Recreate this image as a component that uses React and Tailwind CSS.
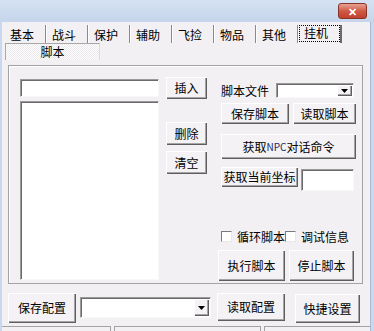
import React from "react";

const raised =
  "bg-[#f4f2f4] shadow-[inset_1px_1px_0_#ffffff,inset_-1px_-1px_0_#5e5e5e,inset_-2px_-2px_0_#a5a5a5] flex items-center justify-center text-black";
const sunken =
  "bg-white border-t border-l border-[#9a9a9a] border-b border-r border-b-[#f8f8f8] border-r-[#f8f8f8] shadow-[inset_1px_1px_0_#6a6a6a]";

function Btn({ className = "", children }) {
  return <div className={`${raised} ${className}`}>{children}</div>;
}

function Arrow() {
  return (
    <div className={`${raised} w-[15px] h-full`}>
      <svg width="7" height="4" viewBox="0 0 7 4">
        <polygon points="0,0 7,0 3.5,4" fill="#000" />
      </svg>
    </div>
  );
}

function Combo({ className = "" }) {
  return (
    <div className={`${sunken} flex justify-end p-[1px] ${className}`}>
      <Arrow />
    </div>
  );
}

function Check() {
  return <div className="w-[11px] h-[11px] bg-white border-t border-l border-[#7a7a7a] border-b border-r border-b-[#e8e8e8] border-r-[#e8e8e8]" />;
}

const tabs = ["基本", "战斗", "保护", "辅助", "飞捡", "物品", "其他"];

export default function App() {
  return (
    <div className="w-[374px] h-[331px] overflow-hidden flex flex-col bg-[#f3f0f3] text-[12px] leading-[14px] text-black font-['Noto_Sans_CJK_SC','Noto_Sans_CJK_JP',sans-serif]">
      {/* title bar */}
      <div className="h-[22px] flex justify-end bg-gradient-to-b from-[#d6e2f2] to-[#c5d5eb] shrink-0">
        <div className="mt-[3px] mr-[7px] w-[29px] h-[16px] rounded-[3px] border border-[#8a3426] bg-gradient-to-b from-[#e6a193] via-[#cf5a45] to-[#c0412d] flex items-center justify-center text-white text-[11px] font-bold leading-none">
          ✕
        </div>
      </div>
      <div className="flex-1 flex">
        <div className="w-[2px] bg-[#c9d8ed]" />
        <div className="flex-1 flex flex-col">
          {/* tab row */}
          <div className="mt-[3px] h-[18px] flex pl-[3px]">
            {tabs.map((t) => (
              <div key={t} className="flex h-full">
                <div className="pl-[5px] pr-[11px] flex items-end pb-[1px]">{t}</div>
                <div className="w-[1px] h-full bg-[#8a8a8a]" />
                <div className="w-[1px] h-full bg-white" />
              </div>
            ))}
            <div className="flex h-full">
              <div className="w-[41px] h-[17px] border border-dotted border-black flex items-end pb-[1px] pl-[4px]">挂机</div>
              <div className="w-[2px] h-full bg-[#6a6a6a]" />
            </div>
          </div>
          {/* sub tab */}
          <div className="flex pl-[3px]">
            <div className="w-[95px] h-[17px] flex items-center justify-center border-t border-l border-[#a8a8a8] border-r border-r-[#dcdcdc] bg-[repeating-conic-gradient(#ffffff_0_25%,#ebe8eb_0_50%)] bg-[length:2px_2px]">
              脚本
            </div>
          </div>
          {/* panel */}
          <div className="ml-[6px] mt-[5px] w-[355px] h-[219px] border border-[#a3a3a3] shadow-[inset_1px_1px_0_#ffffff] flex pt-[11px] pl-[11px]">
            <div className="w-[139px] flex flex-col mt-[2px]">
              <div className={`${sunken} h-[18px]`} />
              <div className={`${sunken} h-[179px] mt-[4px]`} />
            </div>
            <div className="w-[41px] ml-[7px] flex flex-col">
              <Btn className="h-[22px]">插入</Btn>
              <Btn className="h-[23px] mt-[23px]">删除</Btn>
              <Btn className="h-[23px] mt-[6px]">清空</Btn>
            </div>
            <div className="w-[135px] ml-[14px] flex flex-col">
              <div className="flex items-center mt-[6px] h-[15px]">
                <div className="w-[55px]">脚本文件</div>
                <Combo className="w-[78px] h-[15px]" />
              </div>
              <div className="flex mt-[5px]">
                <Btn className="w-[68px] h-[21px]">保存脚本</Btn>
                <Btn className="w-[63px] h-[21px] ml-[4px]">读取脚本</Btn>
              </div>
              <Btn className="mt-[10px] h-[25px] w-[135px]">
                获取<span className="text-[10px] text-[#1a2a6a]">NPC</span>对话命令
              </Btn>
              <div className="flex items-start mt-[8px]">
                <Btn className="w-[77px] h-[20px]">获取当前坐标</Btn>
                <div className={`${sunken} w-[53px] h-[22px] ml-[3px] mt-[2px]`} />
              </div>
              <div className="flex items-center mt-[39px] h-[13px]">
                <Check />
                <div className="ml-[5px] w-[48px]">循环脚本</div>
                <Check />
                <div className="ml-[5px]">调试信息</div>
              </div>
              <div className="flex -ml-[3px] mt-[7px]">
                <Btn className="w-[67px] h-[31px]">执行脚本</Btn>
                <Btn className="w-[65px] h-[31px] ml-[4px]">停止脚本</Btn>
              </div>
            </div>
          </div>
          {/* bottom row */}
          <div className="flex items-start pl-[6px] mt-[9px]">
            <Btn className="w-[68px] h-[30px]">保存配置</Btn>
            <Combo className="w-[131px] h-[21px] ml-[4px] mt-[4px]" />
            <Btn className="w-[68px] h-[28px] ml-[6px]">读取配置</Btn>
            <Btn className="w-[65px] h-[29px] ml-[10px] mt-[1px]">快捷设置</Btn>
          </div>
          <div className="flex mt-[3px] h-[6px]">
            <div className="w-[109px] border-t border-r border-[#a3a3a3]" />
            <div className="w-[147px] ml-[3px] border-t border-l border-r border-[#a3a3a3]" />
            <div className="flex-1 ml-[3px] border-t border-l border-[#a3a3a3]" />
          </div>
        </div>
        <div className="w-[4px] bg-[#c9d8ed] border-l border-[#a9bbd6]" />
      </div>
    </div>
  );
}
